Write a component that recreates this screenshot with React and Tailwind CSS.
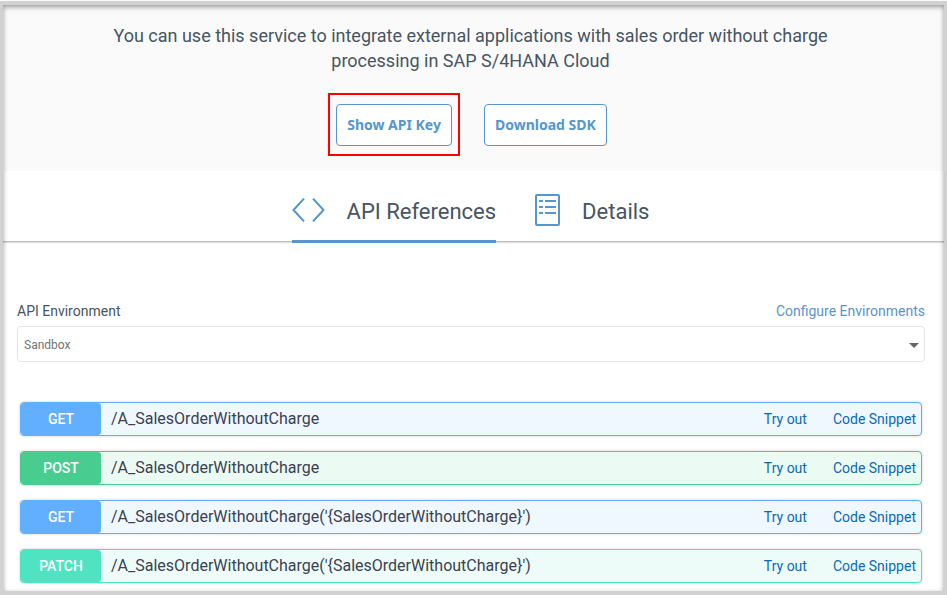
const operations = [
  {
    method: "GET",
    path: "/A_SalesOrderWithoutCharge",
    row: "border-[#61affe] bg-[#eff7ff]",
    badge: "bg-[#61affe]",
  },
  {
    method: "POST",
    path: "/A_SalesOrderWithoutCharge",
    row: "border-[#49cc90] bg-[#ecfaf4]",
    badge: "bg-[#49cc90]",
  },
  {
    method: "GET",
    path: "/A_SalesOrderWithoutCharge('{SalesOrderWithoutCharge}')",
    row: "border-[#61affe] bg-[#eff7ff]",
    badge: "bg-[#61affe]",
  },
  {
    method: "PATCH",
    path: "/A_SalesOrderWithoutCharge('{SalesOrderWithoutCharge}')",
    row: "border-[#50e3c2] bg-[#edfcf9]",
    badge: "bg-[#50e3c2]",
  },
];

function CodeIcon() {
  return (
    <svg
      width="34"
      height="24"
      viewBox="0 0 34 24"
      fill="none"
      stroke="#5496cd"
      strokeWidth="2"
      aria-hidden="true"
      className="mb-1"
    >
      <path d="M12 0.600 1.500 12l10.500 11.400M21 0.600 31.500 12 21 23.400" />
    </svg>
  );
}

function DetailsIcon() {
  return (
    <svg
      width="26"
      height="32"
      viewBox="0 0 26 32"
      fill="none"
      stroke="#5496cd"
      strokeWidth="2"
      aria-hidden="true"
      className="mb-1"
    >
      <rect x="1" y="1" width="23" height="30" rx="1" />
      <path d="M4 7h4M10 7h11M4 13h4M10 13h11M4 19h4M10 19h11" />
    </svg>
  );
}

function OutlineButton({ children }) {
  return (
    <button
      type="button"
      className="h-[42px] rounded border border-[#5496cd] bg-white px-2.5 font-['Noto_Sans',sans-serif] text-sm font-bold text-[#5496cd]"
    >
      {children}
    </button>
  );
}

function Operation({ method, path, row, badge }) {
  return (
    <li className={`flex h-[34px] items-stretch rounded border shadow-[0_0_3px_rgba(0,0,0,0.19)] ${row}`}>
      <span
        className={`flex w-20 items-center justify-center rounded-[3px] text-sm font-medium text-white ${badge}`}
      >
        {method}
      </span>
      <span className="flex flex-1 items-center pl-2.5 text-base text-[#3b4151]">{path}</span>
      <span className="flex items-center gap-[26px] pr-[5px] text-sm text-[#0a6ab4]">
        <a href="#try">Try out</a>
        <a href="#snippet">Code Snippet</a>
      </span>
    </li>
  );
}

export default function App() {
  return (
    <div className="min-h-screen bg-[#d0d0d0] font-[Roboto,sans-serif] text-[#475563]">
      <div className="h-px bg-[#fafafa]" />
      <div className="flex min-h-[calc(100vh-1px)] flex-col border-x-[3px] border-t-4 border-b-4 border-[#d2d2d2]">
        <main className="relative flex-1 bg-white pb-2">
          <header className="flex h-[166px] flex-col items-center bg-[#fafafa] pt-[18px] pr-[6px]">
            <p className="max-w-[740px] text-center text-lg leading-[25px]">
              You can use this service to integrate external applications with sales order without charge processing in
              SAP S/4HANA Cloud
            </p>
            <div className="mt-5 flex items-center gap-6 pr-[6px]">
              <div className="border-2 border-[#ff0000] px-1.5 pt-[9px] pb-2">
                <OutlineButton>Show API Key</OutlineButton>
              </div>
              <OutlineButton>Download SDK</OutlineButton>
            </div>
          </header>

          <nav className="flex h-[71px] justify-center gap-[39px] border-b border-[#bfbfbf] pr-[6px] text-[22px] shadow-[0_1px_1px_rgba(0,0,0,0.12)]">
            <a
              href="#references"
              className="-mb-0.5 flex h-[72px] items-center gap-[21px] border-b-[3px] border-[#5496cd] pt-3"
            >
              <CodeIcon />
              API References
            </a>
            <a
              href="#details"
              className="-mb-0.5 flex h-[72px] items-center gap-[21px] border-b-[3px] border-transparent pt-3"
            >
              <DetailsIcon />
              Details
            </a>
          </nav>

          <section className="pt-[59px] pr-[19px] pl-[14px]">
            <div className="flex h-5 items-center justify-between text-sm">
              <label htmlFor="environment">API Environment</label>
              <a href="#configure" className="text-[#5b94cb]">
                Configure Environments
              </a>
            </div>
            <div className="mt-[5px] grid">
              <select
                id="environment"
                className="col-start-1 row-start-1 h-9 w-full appearance-none rounded border border-[#e5e5e5] bg-white pt-0.5 pl-1.5 text-xs text-[#737373]"
              >
                <option>Sandbox</option>
              </select>
              <svg
                width="10"
                height="5"
                viewBox="0 0 10 5"
                fill="#666666"
                aria-hidden="true"
                className="pointer-events-none col-start-1 row-start-1 mt-0.5 mr-1.5 self-center justify-self-end"
              >
                <path d="M0 0h10L5 5z" />
              </svg>
            </div>
            <ul className="mt-10 flex flex-col gap-[15px] px-[3px]">
              {operations.map((operation, index) => (
                <Operation key={index} {...operation} />
              ))}
            </ul>
          </section>
          <div className="pointer-events-none absolute inset-0 shadow-[inset_0_2px_5px_rgba(0,0,0,0.4)]" />
        </main>
      </div>
    </div>
  );
}
